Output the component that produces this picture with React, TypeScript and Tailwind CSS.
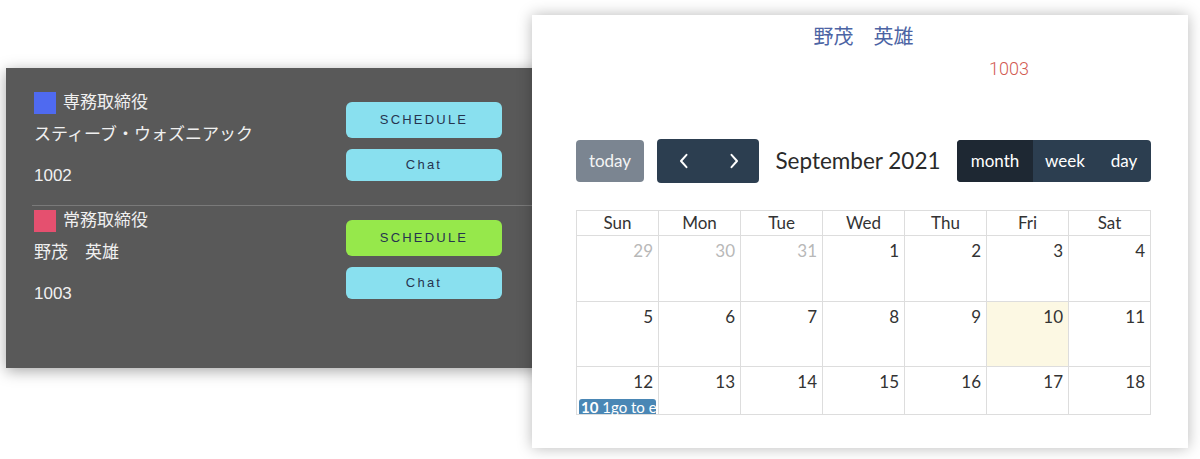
import { ReactNode } from "react";

type Person = {
  role: string;
  color: string;
  name: string;
  code: string;
  scheduleColor: string;
};

const people: Person[] = [
  { role: "専務取締役", color: "bg-[#4f6af0]", name: "スティーブ・ウォズニアック", code: "1002", scheduleColor: "bg-[#89e0ef]" },
  { role: "常務取締役", color: "bg-[#e5506f]", name: "野茂　英雄", code: "1003", scheduleColor: "bg-[#96e84b]" },
];

function PanelButton({ className, children }: { className: string; children: ReactNode }) {
  return (
    <button
      className={`w-[156px] rounded-[6px] text-[13px] tracking-[2.2px] text-[#26344f] font-['Liberation_Sans',sans-serif] ${className}`}
    >
      {children}
    </button>
  );
}

function Entry({ p, first }: { p: Person; first: boolean }) {
  return (
    <div className={`flex items-start pl-[28px] ${first ? "pt-[24px] pb-[19px]" : "pt-[4px]"}`}>
      <div className="flex-1 text-[17px] text-[#f0f0f0]">
        <div className="flex h-[22px] items-center gap-[7px]">
          <span className={`h-[22px] w-[22px] ${p.color}`} />
          <span className="leading-[22px]">{p.role}</span>
        </div>
        <div className="mt-[11px] leading-[20px]">{p.name}</div>
        <div className="mt-[21px] leading-[20px]">{p.code}</div>
      </div>
      <div className="mr-[44px] mt-[10px] flex flex-col gap-[11px]">
        <PanelButton className={`h-[36px] ${p.scheduleColor}`}>SCHEDULE</PanelButton>
        <PanelButton className="h-[32px] bg-[#89e0ef]">Chat</PanelButton>
      </div>
    </div>
  );
}

function Chevron({ dir }: { dir: "left" | "right" }) {
  return (
    <svg width="12" height="16" viewBox="0 0 12 16" fill="none" stroke="white" strokeWidth="2" strokeLinecap="round" strokeLinejoin="round">
      {dir === "left" ? <polyline points="8.5,1.8 3,8 8.5,14.2" /> : <polyline points="3.5,1.8 9,8 3.5,14.2" />}
    </svg>
  );
}

const days = ["Sun", "Mon", "Tue", "Wed", "Thu", "Fri", "Sat"];
const weeks: { n: number; other?: boolean }[][] = [
  [{ n: 29, other: true }, { n: 30, other: true }, { n: 31, other: true }, { n: 1 }, { n: 2 }, { n: 3 }, { n: 4 }],
  [5, 6, 7, 8, 9, 10, 11].map((n) => ({ n })),
  [12, 13, 14, 15, 16, 17, 18].map((n) => ({ n })),
];
const rowHeights = ["h-[66px]", "h-[65px]", "h-[48px]"];

function Calendar() {
  return (
    <div className="font-['Lato',sans-serif] text-[#333]">
      {/* toolbar */}
      <div className="flex h-[42px] items-center justify-between">
        <div className="flex items-center gap-[13px]">
          <button className="h-[42px] w-[68px] rounded-[4px] bg-[#7b8591] text-[17px] text-[#f4f4f4]">today</button>
          <div className="flex h-[44px] w-[102px] rounded-[4px] bg-[#2c3e50]">
            <button className="flex flex-1 items-center justify-center pl-[2px]">
              <Chevron dir="left" />
            </button>
            <button className="flex flex-1 items-center justify-center">
              <Chevron dir="right" />
            </button>
          </div>
        </div>
        <h2 className="text-[22.5px] leading-none text-[#2a2a2a]">September 2021</h2>
        <div className="flex h-[42px] overflow-hidden rounded-[4px] bg-[#2c3e50] text-[17px] text-white">
          <button className="w-[76px] bg-[#1e2833]">month</button>
          <button className="w-[64px]">week</button>
          <button className="w-[54px]">day</button>
        </div>
      </div>

      {/* grid */}
      <div className="mt-[28px] w-[575px] border-l border-t border-[#ddd]">
        <div className="grid grid-cols-7">
          {days.map((d) => (
            <div key={d} className="h-[25px] border-b border-r border-[#ddd] text-center text-[17px] leading-[24px]">
              {d}
            </div>
          ))}
        </div>
        {weeks.map((w, i) => (
          <div key={i} className="grid grid-cols-7">
            {w.map((c) => (
              <div key={c.n} className={`${rowHeights[i]} border-b border-r border-[#ddd] ${c.n === 10 && !c.other ? "bg-[#fcf8e3]" : ""}`}>
                <div className={`pr-[5px] pt-[4px] text-right text-[17px] leading-[22px] ${c.other ? "text-[#b8b8b8]" : ""}`}>{c.n}</div>
                {c.n === 12 && (
                  <div className="mx-[2px] mt-[6px] h-[15px] whitespace-nowrap rounded-t-[3px] bg-[#4a87b5] pl-[2px] text-[15px] leading-[17px] text-white">
                    <span className="font-bold">10</span> 1go to e
                  </div>
                )}
              </div>
            ))}
          </div>
        ))}
      </div>
    </div>
  );
}

export default function App() {
  return (
    <div className="flex h-[459px] w-[1200px] items-start overflow-hidden bg-white">
      {/* left panel */}
      <div className="ml-[6px] mt-[68px] h-[300px] w-[540px] shrink-0 bg-[#595959] shadow-[0_3px_14px_rgba(0,0,0,0.35)] font-['Liberation_Sans','Noto_Sans_CJK_JP',sans-serif]">
        <Entry p={people[0]} first />
        <div className="ml-[26px] h-px bg-[#7a7a7a]" />
        <Entry p={people[1]} first={false} />
      </div>

      {/* calendar card */}
      <div className="relative z-10 ml-[-14px] mt-[15px] h-[433px] w-[656px] shrink-0 bg-white pl-[44px] pr-[37px] pt-[9px] shadow-[0_0_14px_rgba(0,0,0,0.28)]">
        <div className="text-center text-[20px] leading-[24px] text-[#4c64a4] font-['Noto_Sans_CJK_JP',sans-serif]">野茂　英雄</div>
        <div className="mt-[9px] pr-[122px] text-right text-[18px] font-light leading-[24px] text-[#d25a52] font-['Roboto',sans-serif]">1003</div>
        <div className="mt-[59px]">
          <Calendar />
        </div>
      </div>
    </div>
  );
}
